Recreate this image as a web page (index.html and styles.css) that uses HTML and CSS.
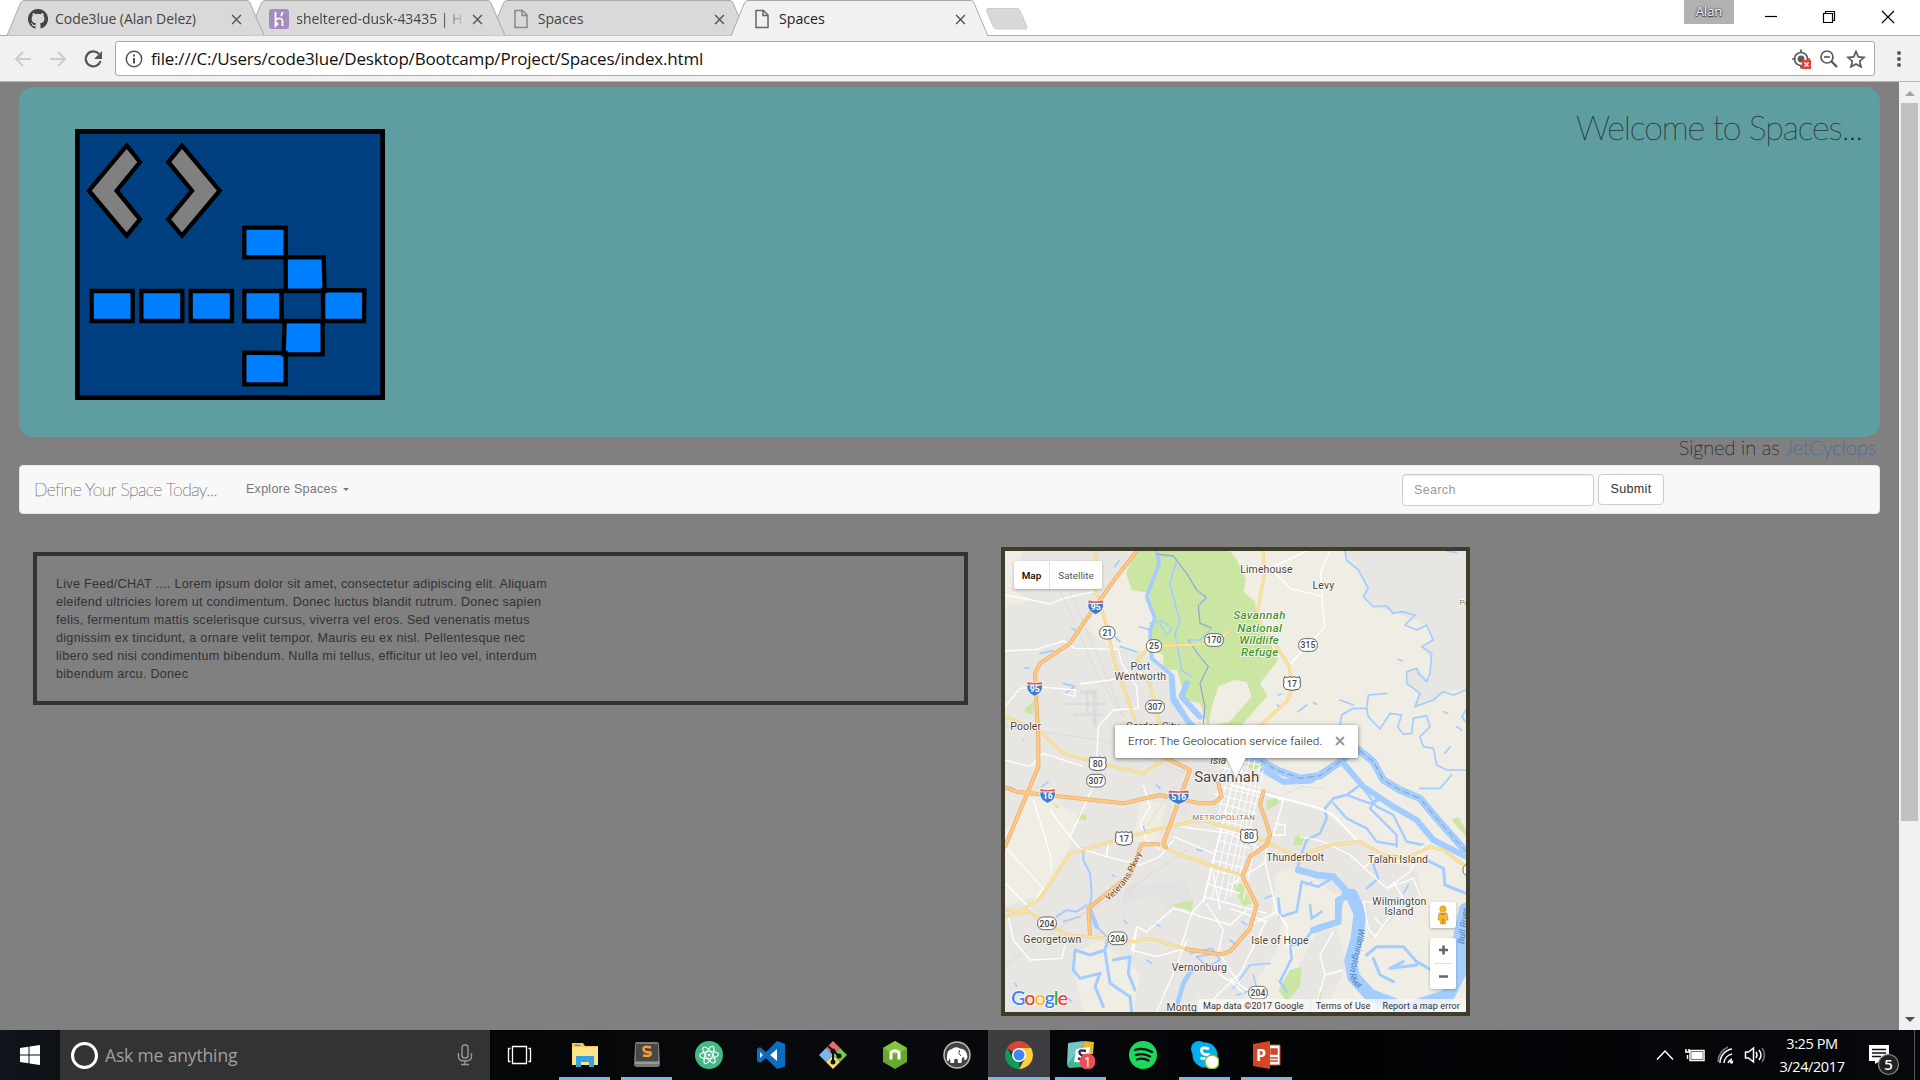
FILE: index.html
```html
<!DOCTYPE html>
<html lang="en">
<head>
<meta charset="utf-8">
<title>Spaces</title>
<link rel="stylesheet" href="styles.css">
</head>
<body>
<div class="tabstrip">
  <div class="tab tab-1">
    <svg class="tab-shape" viewBox="0 0 257 36"><path d="M0 35.5 13.500 3Q15 .5 17 .5H240Q242 .5 243 3L257 35.500"/></svg>
    <svg class="tab-icon" viewBox="0 0 16 16"><path fill="#444" d="M8 0C3.580 0 0 3.580 0 8c0 3.540 2.290 6.530 5.470 7.590.4.070.55-.17.55-.38v-1.490c-2.010.37-2.530-.49-2.690-.94-.09-.23-.48-.94-.82-1.130-.28-.15-.68-.52-.01-.53.63-.01 1.080.58 1.230.82.72 1.210 1.870.87 2.330.66.070-.52.28-.87.51-1.070-1.780-.2-3.640-.89-3.640-3.950 0-.87.31-1.590.82-2.150-.08-.2-.36-1.020.08-2.120 0 0 .67-.21 2.200.82a7.600 7.600 0 0 1 4 0c1.530-1.040 2.200-.82 2.200-.82.44 1.100.16 1.920.08 2.120.51.56.82 1.270.82 2.150 0 3.070-1.870 3.750-3.650 3.950.29.25.54.73.54 1.480v2.190c0 .21.15.46.55.38A8 8 0 0 0 8 0z"/></svg>
    <span class="tab-title t1">Code3lue (Alan Delez)</span>
    <svg class="tab-close" viewBox="0 0 10 10"><path d="M1 1 9 9M9 1 1 9"/></svg>
  </div>
  <div class="tab tab-2">
    <svg class="tab-shape" viewBox="0 0 257 36"><path d="M0 35.500 13.500 3Q15 .5 17 .5H240Q242 .5 243 3L257 35.500"/></svg>
    <svg class="tab-icon" viewBox="0 0 20 20"><rect width="20" height="20" rx="3" fill="#a78bc0"/><path d="M6.500 3v8q3-2 5-1.500T13.500 12v5M6.500 17v-4l2 2zM13.500 3q0 2-1.500 4" fill="none" stroke="#fff" stroke-width="1.800"/></svg>
    <span class="tab-title t2">sheltered-dusk-43435 | H</span>
    <svg class="tab-close" viewBox="0 0 10 10"><path d="M1 1 9 9M9 1 1 9"/></svg>
  </div>
  <div class="tab tab-3">
    <svg class="tab-shape" viewBox="0 0 257 36"><path d="M0 35.500 13.500 3Q15 .5 17 .5H240Q242 .5 243 3L257 35.500"/></svg>
    <svg class="tab-icon" viewBox="0 0 20 20"><path d="M4 1.500h7.500l4.500 4.500v12.500H4zM11 2v4.500h5" fill="none" stroke="#888" stroke-width="1.500"/></svg>
    <span class="tab-title">Spaces</span>
    <svg class="tab-close" viewBox="0 0 10 10"><path d="M1 1 9 9M9 1 1 9"/></svg>
  </div>
  <div class="tab tab-active">
    <svg class="tab-shape" viewBox="0 0 257 36"><path d="M0 36 13.500 3Q15 .5 17 .5H240Q242 .5 243 3L257 36"/></svg>
    <svg class="tab-icon" viewBox="0 0 20 20"><path d="M4 1.500h7.500l4.500 4.500v12.500H4zM11 2v4.500h5" fill="none" stroke="#666" stroke-width="1.500"/></svg>
    <span class="tab-title">Spaces</span>
    <svg class="tab-close" viewBox="0 0 10 10"><path d="M1 1 9 9M9 1 1 9"/></svg>
  </div>
  <svg class="newtab" viewBox="0 0 44 22"><path d="M3 .5H32Q34 .5 35 2.500L42 19Q42.500 21 40.500 21H12Q9.500 21 8.500 19L1.500 3Q1 .5 3 .5Z" fill="#d8d8d8" stroke="#ccc"/></svg>
  <div class="win">
    <span class="user">Alan</span>
    <svg class="win-buttons" viewBox="0 0 160 36"><g fill="none" stroke="#000" stroke-width="1.200"><path d="M9 16.500H21"/><path d="M67.500 13.500h9v9h-9zM69.500 13v-1.500h9v9H77"/><path d="M126 11 138 23M138 11 126 23"/></g></svg>
  </div>
</div>
<div class="toolbar">
  <svg class="nav-icons" viewBox="0 0 115 45"><g fill="none" stroke-width="2"><path stroke="#ccc" d="M31 23H16M23 16 16 23 23 30"/><path stroke="#ccc" d="M50 23H65M58 16 65 23 58 30"/><path stroke="#555" stroke-width="2.200" d="M99 18A7.500 7.500 0 1 0 100.500 25"/></g><path fill="#555" d="M102 15v8h-8z"/></svg>
  <div class="omnibox">
    <svg class="info" viewBox="0 0 18 18"><circle cx="9" cy="9" r="7.700" fill="none" stroke="#555" stroke-width="1.500"/><path d="M9 8v5.500M9 4.500v2" stroke="#555" stroke-width="2"/></svg>
    <span class="url">file:///C:/Users/code3lue/Desktop/Bootcamp/Project/Spaces/index.html</span>
    <svg class="omni-icons" viewBox="0 0 76 22"><g fill="none" stroke="#5a5a5a" stroke-width="1.700"><circle cx="10" cy="11" r="6.500"/><path d="M10 1.500V5M10 17v3.500M1 11h3.500M16 11h3"/><circle cx="10" cy="11" r="2.600" fill="#5a5a5a"/><circle cx="36" cy="9" r="6"/><path d="M33 9h6"/><path d="M40.500 13.500 46 19" stroke-width="2.400"/><path d="M65 3.500 67.300 8.900 73 9.400 68.700 13.200 70 18.800 65 15.900 60 18.800 61.300 13.200 57 9.400 62.700 8.900Z"/></g><rect x="11" y="12" width="9" height="9" fill="#db4437"/><path d="M13.500 14.500l4 4m0-4-4 4" stroke="#fff" stroke-width="1.400"/></svg>
  </div>
  <svg class="menu" viewBox="0 0 10 20"><g fill="#5a5a5a"><circle cx="5" cy="4" r="2"/><circle cx="5" cy="10" r="2"/><circle cx="5" cy="16" r="2"/></g></svg>
</div>

<div class="viewport">
  <main class="page">
    <header class="hero">
      <svg class="logo" viewBox="45 57 930 813">
        <path fill="#004080" stroke="#000" stroke-width="14" d="M52 64H968V863H52Z"/>
        <g fill="#808080" stroke="#000" stroke-width="13"><path d="M200 107 240 156 170 242 240 328 200 377 87 242Z"/><path d="M366 107 325 156 396 242 325 328 366 377 479 242Z"/></g>
        <g fill="#0080ff" stroke="#000" stroke-width="13">
          <path d="M95 543H218V633H95ZM244 543H367V633H244ZM392 543H516V633H392ZM553 353H677V442H553ZM553 728 677 729V823H553ZM677 442H791L794 543H677ZM789 540 913 541 912 633H789ZM674 633H788V733H671ZM553 543H665V633H553Z"/>
          <path fill="#004080" d="M665 543H789V633H665Z"/>
        </g>
      </svg>
      <h1>Welcome to Spaces...</h1>
    </header>
    <p class="signed"><span>Signed in as <a>JetCyclops</a></span></p>
    <nav class="navbar">
      <span class="brand">Define Your Space Today...</span>
      <span class="explore">Explore Spaces</span><i class="caret"></i>
      <form class="search"><input class="field" type="text" placeholder="Search"><button class="submit" type="button">Submit</button></form>
    </nav>
    <div class="content">
      <section class="chat">Live Feed/CHAT .... Lorem ipsum dolor sit amet, consectetur adipiscing elit. Aliquam<br>eleifend ultricies lorem ut condimentum. Donec luctus blandit rutrum. Donec sapien<br>felis, fermentum mattis scelerisque cursus, viverra vel eros. Sed venenatis metus<br>dignissim ex tincidunt, a ornare velit tempor. Mauris eu ex nisl. Pellentesque nec<br>libero sed nisi condimentum bibendum. Nulla mi tellus, efficitur ut leo vel, interdum<br>bibendum arcu. Donec</section>
      <section class="map">
        <svg class="map-art" viewBox="15 33 1383 1383">
          <defs>
            <g id="interstate"><path d="M-22-20Q0-14 22-20L24-10H-24Z" fill="#dc5550" stroke="#fff" stroke-width="2"/><path d="M-23-10H23Q27 12 0 24-27 12-23-10Z" fill="#3f7ccb" stroke="#fff" stroke-width="2"/></g>
            <path id="us" d="M-22-20-14-17Q-6-22 0-18 6-22 14-17L22-20Q27-12 24-4 29 12 18 18L0 21-18 18Q-29 12-24-4-27-12-22-20Z" fill="#fff" stroke="#555" stroke-width="3"/>
            <rect id="st3" x="-28" y="-19" width="56" height="38" rx="17" fill="#fff" stroke="#666" stroke-width="3"/>
            <rect id="st2" x="-23" y="-19" width="46" height="38" rx="18" fill="#fff" stroke="#666" stroke-width="3"/>
          </defs>
          <rect x="0" y="0" width="1400" height="1420" fill="#f0ede4"/>
          <g fill="#e8e6e3">
            <path d="M70 33H405L290 190 250 255 330 325 430 335 500 400 570 560 690 620 780 690 790 745 970 815 1060 890 1150 960 1250 990 1265 1060 1110 1200 1090 1080 1000 1060 900 980 830 1000 815 1120 760 1160 850 1120 830 1230 700 1416H400L420 1300 300 1200 220 1240 230 1330 250 1416H15V1100L130 1060 200 940 240 820 90 770 15 870V200L100 180 30 150Z"/>
            <path d="M1035 33 1090 110 1095 170 1130 200 1220 230 1290 260 1300 300 1265 320 1295 360 1290 420 1255 385 1220 390 1220 430 1255 455 1250 500 1300 480 1330 455 1398 450V33Z"/>
            <path d="M950 1180 1010 1165 1040 1280 970 1416H850L900 1270Z"/>
          </g>
          <g opacity=".8"><path d="M90 770 150 760 240 850 130 890ZM420 780 500 790 470 920 400 900Z" fill="#f0ede4"/></g>
          <g fill="#dddbd9"><path d="M195 488h120v8H195zM240 450l50 0 0 110-12 0 0-98-38 0zM220 520h90v7h-90zM258 460h8v60h-8z"/><path d="M380 1040 560 1020 580 1100 500 1110 470 1060 360 1100Z" fill="#e3e1e1"/></g>
          <g fill="#cbe6a3">
            <path d="M405 33 378 100 395 150 450 160 440 185 465 235 450 270 440 320 490 345V390H530L560 480 600 490 625 560H720L755 470 758 426 720 420 660 432 640 525 700 556 725 556 802 467 780 430 835 360 770 230 765 185 730 155 738 120 710 60 690 33Z"/>
            <path d="M70 510 105 480 100 525 80 520ZM60 605 75 590 70 605ZM510 1095 580 1080 575 1112ZM235 820 262 828 258 842 232 835ZM155 785 180 800 170 805ZM885 890 915 885 905 915 880 915ZM800 780 830 773 838 790 800 810ZM700 1035 725 1030 755 1090 730 1100ZM835 1350 870 1290 905 1280 900 1340 860 1385ZM1355 840 1375 830 1398 870V890ZM730 672 795 675 760 690ZM950 1365 965 1355 960 1385Z"/>
            <path d="M655 440 700 420 740 425 755 470 690 545 625 560 635 500Z" fill="#f0ede4"/>
          </g>

          <g fill="none" stroke="#a3ccff" stroke-linejoin="round" stroke-linecap="round">
            <g stroke-width="6">
              <path d="M530 60 510 130 525 190 540 245 525 280 545 390 575 410" stroke-width="5"/>
              <path d="M450 250 485 242 515 265 500 285 480 250M470 45 520 50 560 100 590 150 620 175 595 200 600 250 635 265 600 300 565 300 600 350 625 380 600 430 615 500 610 550" stroke-width="4"/>
              <path d="M345 80l12-18M120 340l40-8M75 385l12-2M190 430l35 10-30 20M345 290l15 15M360 320l50 15M420 260l30 10M215 265l12 6" stroke-width="5"/>
            </g>
            <path stroke-width="11" d="M470 33 478 70 440 170 465 235 450 270 455 355 515 405 522 470 570 550"/>
            <path stroke-width="18" d="M515 410 520 480 565 545 640 625 700 655M560 430 545 470 600 530"/>
            <g transform="translate(690 0)" stroke-width="5">
              <path d="M345 33 350 60 385 90 415 145 400 170 430 200 470 198 490 220 515 215 555 225 525 255 560 270 590 255 610 300 575 320 605 340 600 400 590 425 565 400 560 385 530 395V430L570 460 555 500 610 480 640 455 670 465 708 450"/>
              <path d="M330 555 335 525 370 505 410 505 415 465 470 460M410 505 415 530 450 567 480 520 515 525 503 560 520 583 545 580 550 535 590 527 600 560 570 590 580 620 610 625 620 675 650 690 708 690"/>
              <path d="M330 480l40 15M205 515l25-20M250 488l10 5M505 358l12 5M650 33l30 5M640 515l12 5M680 560l15 10M708 510l-12 20 10 15M145 465l8-3M142 495l8 5M660 620l-15 20"/>
            </g>
            <path stroke-width="22" d="M690 645 780 660 830 690 900 715 960 707 1020 665 1070 625 1120 665 1150 720 1200 750 1260 775 1310 835 1398 935"/>
            <path stroke-width="18" d="M790 690 850 725 930 722 1010 670M1030 670 1090 740 1180 800 1250 840 1300 900 1398 950"/>
            <g transform="translate(690 705)" stroke-width="8">
              <path d="M390 30 350 60 310 70 285 100 290 130 270 175 230 195 210 250 200 290"/>
              <path d="M310 85 350 130 410 160 440 200 500 210M400 40 440 95 490 120 530 200 580 210M350 60 420 85 460 70M440 70 420 100 500 180 500 215M460 240 430 270 445 310 410 340" stroke-width="7"/>
              <path d="M215 320 265 335 305 310M215 320 200 410 150 425 145 370M240 390 245 430 275 410M340 350 325 440 250 465 215 505 180 510 185 550 150 620 170 650"/>
              <path d="M410 540 440 515 520 515 560 560 630 600M560 570 480 580 520 560M430 550 450 600 490 620M590 255 640 280 645 330 708 355" stroke-width="9"/>
              <path d="M10 640 60 570 120 565M70 600 80 640 20 660M570 40H630L665 0M130 360l-25 10M230 330l15-10M480 390l20-20M535 330l-15 25" stroke-width="5"/>
            </g>
            <path stroke-width="20" d="M895 990 950 1005 1000 1010 1050 1065 1015 1080 1015 1145 940 1170"/>
            <path stroke-width="38" d="M1055 1065 1080 1120 1070 1200 1052 1260 1060 1310 1110 1365 1200 1400"/>
            <path stroke-width="44" d="M1398 1110 1380 1200 1385 1280 1340 1370 1250 1400"/>
            <path stroke-width="6" d="M250 925 250 960 270 1000 275 1060 268 1110 290 1160 320 1190M170 1130 200 1110 230 1115 260 1095M190 1145 240 1130"/>
            <path stroke-width="9" d="M325 1195 315 1230 270 1245 225 1230 220 1290 240 1315 300 1300 285 1340 310 1400M315 1235 330 1330 390 1370 395 1416M340 1260 390 1250 385 1300 405 1350"/>
            <path stroke-width="14" d="M575 1290 550 1330 530 1400M270 1110 290 1160"/>
            <path stroke-width="5" d="M570 1240 635 1225 660 1260 620 1280 590 1250 650 1240M30 740l15 10M125 740l20-15M370 1140l10 10M465 1150l15 10M345 1010l-8-5M590 928l18 4M350 880l25 20M430 860l5 15M470 735l10 10M690 1200l15 12M725 1145l15 10M45 1330l5 8M200 1370l15 15M440 1260l15 10"/>
          </g>
          <g fill="none" stroke="#8b9aac" stroke-width="3" stroke-dasharray="20 11"><path d="M780 660 830 690 900 715 960 707 1020 665 1070 625 1120 665 1150 720 1200 750 1260 775 1310 835 1398 935"/><path stroke="#97a3ae" stroke-dasharray="none" d="M470 42 520 47 560 100 590 150 620 172 595 195 600 250 635 263M565 302 600 350 625 380 600 430 615 500 610 550"/></g>

          <g fill="none" stroke="#d5d4d2" stroke-width="2"><path d="M170 130 300 420 370 530M200 130 370 530M15 560 300 600 560 700M15 1275 200 1150 430 1020 560 930M350 1090 470 980M440 860 520 740 560 830M850 765 900 740 970 745"/></g>
          <g fill="none" stroke="#fff" stroke-width="4" stroke-linejoin="round">
            <path d="M15 165 70 175 150 192 190 175 280 155M15 333 110 328 190 303 225 325 355 328 365 370 410 440 415 505 340 510 295 560 290 660M15 500 60 445 110 440 225 450V470L190 460M240 432 330 420 440 395M15 660 90 680 130 640 250 680M280 740 210 890 240 925 320 950 325 910 370 895M210 890 150 810M15 920 130 1045 90 1100M15 1030 90 1105M25 1130 40 1200 90 1260 185 1255 195 1215M100 780 150 940 155 990"/>
            <path d="M320 950 420 975 480 950 520 900M400 1240 410 1160 440 1175 520 1105 690 1155 740 1110M410 1160 395 1230 470 1250 540 1230 575 1120M470 1416 520 1300 560 1200M575 1120 610 1080 700 720M655 1235 670 1170 620 1090M655 1300 700 1330 730 1360M655 1235 690 1290 720 1330M600 1416 720 1300 800 1140"/>
            <path d="M430 735 450 800 420 850 440 900 480 930M540 860 690 880 790 930M520 890 640 940M620 1030 720 1060M610 1070 800 1120M640 1000 660 1110"/>
            <g transform="translate(690 0)"><path d="M300 33 272 95 278 210 285 260 178 375M230 33 120 85 180 145 280 170"/></g>
            <g transform="translate(690 705)"><path stroke-width="6" d="M0 30 100 55 270 100 310 120 380 195"/><path d="M100 55 160 75 130 180 165 180V150L135 145M210 185 280 200 360 240 470 340 500 320 540 290 580 210M470 340 550 310 570 360M490 320 520 370 435 485 415 460 400 380 430 380M400 280 450 235M435 430 460 455M110 210 105 260 140 410 60 450 0 540M140 410 170 450 175 520M310 470 270 540 285 600 260 680M285 600 340 585M0 610 60 650M0 330 110 260M0 400 110 440"/></g>
            <path stroke-width="3" d="M720 640 610 1090M735 640 635 1080M750 650 655 1080M765 660 675 1080M780 670 690 1070M700 640 650 850M685 650 640 800M790 690 710 1040M770 900 730 1080M660 680 780 710M650 710 790 745M645 735 780 770M640 760 775 795M660 790 770 820M665 815 765 840M655 840 760 865M650 865 755 890M650 900 750 925M640 930 740 955M635 960 735 985M630 990 730 1010"/>
          </g>
          <g fill="none" stroke-linejoin="round" stroke-linecap="round">
            <path stroke="#eccf83" stroke-width="9" d="M290 33 280 130 300 190 320 260 345 370 405 540M690 272 640 312 490 317 440 330 412 360 450 430 480 556M15 530 120 575 190 640 300 670 430 700 500 655M15 1110 60 1115 120 1075 210 940 300 915 460 870 600 840 700 865 800 905 890 950 990 915 1080 905 1150 945 1220 955 1290 920 1330 930 1398 980M15 1130 80 1113 200 1185 310 1193 400 1205 450 1195 560 1228M490 920 540 945 728 1007M788 33 795 90 770 230 840 335 868 380 875 450 860 485 780 556"/>
            <path stroke="#fbe3a0" stroke-width="6" d="M290 33 280 130 300 190 320 260 345 370 405 540M690 272 640 312 490 317 440 330 412 360 450 430 480 556M15 530 120 575 190 640 300 670 430 700 500 655M15 1110 60 1115 120 1075 210 940 300 915 460 870 600 840 700 865 800 905 890 950 990 915 1080 905 1150 945 1220 955 1290 920 1330 930 1398 980M15 1130 80 1113 200 1185 310 1193 400 1205 450 1195 560 1228M490 920 540 945 728 1007M788 33 795 90 770 230 840 335 868 380 875 450 860 485 780 556"/>
            <path stroke="#e8ac66" stroke-width="12" d="M410 33 350 110 250 250 210 310 120 370 105 400 115 600V680L15 920M15 743 50 755 370 790 480 765 600 790 640 790 665 770 655 730M500 655 570 690 530 800 490 910 498 922M475 913H425L390 1005 265 1105 270 1180M560 1228 660 1243 690 1235 750 1165 770 1095 728 1010 750 950 800 915 810 885 795 835 780 795 790 755"/>
            <path stroke="#fdc885" stroke-width="8" d="M410 33 350 110 250 250 210 310 120 370 105 400 115 600V680L15 920M15 743 50 755 370 790 480 765 600 790 640 790 665 770 655 730M500 655 570 690 530 800 490 910 498 922M475 913H425L390 1005 265 1105 270 1180M560 1228 660 1243 690 1235 750 1165 770 1095 728 1010 750 950 800 915 810 885 795 835 780 795 790 755"/>
          </g>
          <use href="#interstate" x="287" y="200"/><use href="#interstate" x="104" y="445"/><use href="#interstate" x="143" y="766"/><use href="#interstate" transform="translate(536 770) scale(1.350 1)"/>
          <use href="#st2" x="322" y="278"/><use href="#st2" x="462" y="318"/><use href="#st3" x="642" y="300"/><use href="#st3" x="465" y="500"/><use href="#st3" x="288" y="722"/><use href="#st3" x="924" y="315"/><use href="#st3" x="141" y="1150"/><use href="#st3" x="353" y="1195"/><use href="#st3" x="774" y="1358"/>
          <use href="#us" x="293" y="671"/><use href="#us" x="372" y="895"/><use href="#us" x="876" y="430"/><use href="#us" x="747" y="888"/><use href="#st2" x="1412" y="990"/>
          <g class="shield-text" text-anchor="middle">
            <text x="322" y="288">21</text><text x="462" y="328">25</text><text x="642" y="310">170</text><text x="465" y="510">307</text><text x="293" y="681">80</text><text x="288" y="732">307</text><text x="924" y="325">315</text><text x="876" y="440">17</text><text x="747" y="898">80</text><text x="372" y="905">17</text><text x="141" y="1160">204</text><text x="353" y="1205">204</text><text x="774" y="1368">204</text>
            <g class="inter-text"><text x="287" y="211">95</text><text x="104" y="456">95</text><text x="143" y="777">16</text><text x="536" y="781">516</text></g>
          </g>
          <g class="place" text-anchor="middle">
            <text x="421" y="391" textLength="59">Port</text><text x="421" y="420" textLength="155">Wentworth</text><text x="77" y="570" textLength="92">Pooler</text><text x="458" y="570" textLength="160">Garden City</text>
            <text x="719" y="98" textLength="157" dx="80">Limehouse</text><text x="970" y="146" textLength="65">Levy</text><text x="655" y="672" class="ital">Isla</text>
            <text x="680" y="725" class="city" textLength="195">Savannah</text>
            <text x="157" y="1209" textLength="174">Georgetown</text><text x="598" y="1293" textLength="166">Vernonburg</text><text x="545" y="1412">Montg</text>
            <text x="885" y="963" textLength="173">Thunderbolt</text><text x="1194" y="968" textLength="180">Talahi Island</text><text x="1198" y="1094" textLength="162">Wilmington</text><text x="1197" y="1126" textLength="87">Island</text><text x="840" y="1212" textLength="172">Isle of Hope</text>
            <text class="metro" x="671" y="841" textLength="188">METROPOLITAN</text><text class="metro" x="1393" y="194">PA</text>
            <g class="refuge"><text x="778" y="238" textLength="157">Savannah</text><text x="779" y="275" textLength="134">National</text><text x="777" y="311" textLength="119">Wildlife</text><text x="779" y="348" textLength="112">Refuge</text></g>
          </g>
          <path id="vet" fill="none" d="M323 1083Q392 1035 430 925"/><text class="vet"><textPath href="#vet">Veterans Pkwy</textPath></text>
          <path id="wil" fill="none" d="M1076 1165Q1070 1220 1050 1290 1042 1340 1105 1358"/><text class="river"><textPath href="#wil">Wilmington River</textPath></text>
          <text class="river" transform="translate(1391 1213) rotate(-82)">Bull River</text>
        </svg>
        <div class="maptype"><b>Map</b><span>Satellite</span></div>
        <div class="bubble"><span>Error: The Geolocation service failed.</span><svg class="bubble-x" viewBox="0 0 10 10"><path d="M1 1 9 9M9 1 1 9"/></svg><svg class="tail" viewBox="0 0 20 24"><path d="M0 0 10 22 20 0Z" fill="#fff"/><path d="M0 1 10 22 20 1" fill="none" stroke="#aaa" stroke-width=".7"/></svg></div>
        <div class="pegman"><svg viewBox="0 0 26 26"><circle cx="13" cy="7" r="3.200" fill="#f5b32a" stroke="#d99417" stroke-width=".6"/><path d="M9 11h8l1 7h-2l-.5 4h-5l-.5-4H8z" fill="#f9b72e" stroke="#d28b17" stroke-width=".6"/><path d="M13 16v6M10 11l3 2 3-2" stroke="#bd7517" fill="none"/></svg></div>
        <div class="zoomer"><svg viewBox="0 0 26 51"><path d="M13.500 7.500v9M9 12h9M9 38.500h9" stroke="#666" stroke-width="2.600"/><path d="M4 25.500h18" stroke="#e0e0e0"/></svg></div>
        <svg class="google" viewBox="0 0 60 22"><text y="16" textLength="57"><tspan fill="#4285f4">G</tspan><tspan fill="#ea4335">o</tspan><tspan fill="#fbbc05">o</tspan><tspan fill="#4285f4">g</tspan><tspan fill="#34a853">l</tspan><tspan fill="#ea4335">e</tspan></text></svg>
        <div class="legal"><span>Map data ©2017 Google</span><span>Terms of Use</span><span>Report a map error</span></div>
      </section>
    </div>
  </main>
  <div class="scrollbar"><i class="up"></i><i class="thumb"></i><i class="down"></i></div>
</div>

<footer class="taskbar">
  <div class="start"><svg viewBox="0 0 20 20"><path fill="#fff" d="M0 3 8.500 1.800V9.500H0ZM9.500 1.600 20 0V9.500H9.500ZM0 10.500H8.500V18.200L0 17ZM9.500 10.500H20V20L9.500 18.400Z"/></svg></div>
  <div class="cortana"><i class="ring"></i><span>Ask me anything</span><svg class="mic" viewBox="0 0 16 22"><g fill="none" stroke="#999" stroke-width="1.400"><rect x="5" y="1" width="6" height="13" rx="2.500"/><path d="M1.500 9v4q0 4 6.500 4t6.500-4V9M8 17v4M4 20.500h8"/></g></svg></div>
  <div class="taskview"><svg viewBox="0 0 26 20"><g fill="none" stroke="#fff" stroke-width="1.300"><path d="M5.500 1.500h14v17h-14zM3.500 3.500h-2v13h2M21.500 3.500h2v13h-2"/></g></svg></div>
  <div class="app open"><svg viewBox="0 0 28 28"><path fill="#f4c64f" d="M1 2h11l2 3h13v6H1z"/><path fill="#fde58c" d="M1 6h26v18H1z"/><path fill="#35a3df" d="M5 15h18v11h-5v-5h-8v5H5z"/><path fill="#35a3df" d="M4 3.500h5v1.500H4z"/></svg></div>
  <div class="app open"><svg viewBox="0 0 28 28"><path fill="#777" d="M2 3q0-2 2-2h20q2 0 2 2l1 20q0 3-3 3H4q-3 0-3-3z"/><path fill="#484848" d="M3 3h22v17H3z"/><path fill="#999" d="M2 21h24v2H2z"/><path d="M18 6.500Q10.500 4.500 10.500 8T17.500 11.500Q19 16 10 14.500" fill="none" stroke="#ff9a2e" stroke-width="2.500"/></svg></div>
  <div class="app"><svg viewBox="0 0 28 28"><circle cx="14" cy="14" r="14" fill="#45b984"/><g fill="none" stroke="#fff" stroke-width="1.100"><ellipse cx="14" cy="14" rx="3.500" ry="9.500" transform="rotate(25 14 14)"/><ellipse cx="14" cy="14" rx="3.500" ry="9.500" transform="rotate(85 14 14)"/><ellipse cx="14" cy="14" rx="3.500" ry="9.500" transform="rotate(-35 14 14)"/></g><circle cx="14" cy="14" r="1.500" fill="#fff"/></svg></div>
  <div class="app"><svg viewBox="0 0 28 28"><path fill="#0a6fc2" d="M20 0 29 3V25L20 28 9 17 3 22 0 20V8L3 6 9 11ZM20 8 13 14 20 20ZM3 11V17L6 14Z" fill-rule="evenodd"/><path fill="#fff" d="M20 8 13 14 20 20ZM3 11V17L6 14Z"/></svg></div>
  <div class="app"><svg viewBox="0 0 28 28"><path fill="#f06c70" d="M14 0 21 7 14 14 7 7Z"/><path fill="#7eb6ef" d="M7 7 14 14 7 21 0 14Z"/><path fill="#77c84c" d="M21 7 28 14 21 21 14 14Z"/><path fill="#ffd96b" d="M14 14 21 21 14 28 7 21Z"/><g fill="#111" stroke="#111" stroke-width="2"><path d="M9 5 20 15M14 10v12"/><circle cx="14" cy="10" r="1.500"/><circle cx="20" cy="15" r="1.500"/><circle cx="14" cy="21" r="1.500"/></g></svg></div>
  <div class="app"><svg viewBox="0 0 28 28"><path fill="#69a82e" d="M14 0 26 7V21L14 28 2 21V7Z"/><path fill="#86c440" d="M14 0 26 7 14 14 2 7Z"/><path d="M10 18.500V11.500Q14 8 18 11.500V18.500" stroke="#fff" stroke-width="3" fill="none"/></svg></div>
  <div class="app"><svg viewBox="0 0 28 28"><circle cx="14" cy="14" r="13" fill="#444" stroke="#bbb" stroke-width="1.500"/><path fill="#fff" d="M4 15Q4 9 9 8 12 5 17 7.500 24 8 24.500 16L23 19H21.500L21 16 19 17 18.500 22H15L14.500 18H11.500L11 22H7.500L7 17 5.500 20H4Z"/><path d="M16.500 9q-2 4 1.500 6" fill="none" stroke="#444"/></svg></div>
  <div class="app open active"><svg viewBox="0 0 28 28"><path fill="#db4437" d="M14 14 1.900 7A14 14 0 0 1 26.100 7H14Z"/><path fill="#0f9d58" d="M14 14 14 28A14 14 0 0 1 1.900 7L8 17.500Z"/><path fill="#ffcd40" d="M14 7H26.100A14 14 0 0 1 14 28L20 17.500Z"/><circle cx="14" cy="14" r="7" fill="#fff"/><circle cx="14" cy="14" r="5.500" fill="#4285f4"/></svg></div>
  <div class="app open"><svg viewBox="0 0 28 28"><path fill="#75c8c5" d="M1 2 17 0 13 14 0 24Z"/><path fill="#e5b92d" d="M17 0 27 1 26 13 13 13Z"/><path fill="#3eb991" d="M0 24 8 13 16 26 2 27Z"/><path fill="#fff" d="M9 8 23 6 21 22 7 21Z"/><path d="M19 10Q12 8.500 12.500 11.500T18 15Q17 19 11 17.500" fill="none" stroke="#3d2b43" stroke-width="2.400"/><circle cx="20.500" cy="20.500" r="8" fill="#eb4d5c"/><text x="20.500" y="25.500" text-anchor="middle" font-size="14" fill="#fff">1</text></svg></div>
  <div class="app"><svg viewBox="0 0 28 28"><circle cx="14" cy="14" r="14" fill="#1ed760"/><path d="M6 9Q14 6 23 11M7 14Q14 11.500 21 15.500M8 18.500Q14 16.500 19.500 19.500" fill="none" stroke="#111" stroke-width="2.300" stroke-linecap="round"/></svg></div>
  <div class="app open"><svg viewBox="0 0 28 28"><circle cx="8" cy="8" r="8" fill="#00aff0"/><circle cx="14" cy="14" r="12.500" fill="#00aff0"/><path d="M18 8Q10.500 5 10.500 9.500T17.500 13.500Q19 19 9.500 17" fill="none" stroke="#fff" stroke-width="2.800"/><circle cx="21" cy="21" r="7" fill="#fff" stroke="#8bbf20" stroke-width="1.500"/></svg></div>
  <div class="app open"><svg viewBox="0 0 28 28"><path fill="#fff" stroke="#d24726" d="M14 4h13v20H14z"/><path d="M18 8h6v5h-6zM17 17h8M17 20h8" stroke="#d24726" fill="#d24726" stroke-width="1.500"/><path fill="#d24726" d="M0 3 17 0V28L0 25Z"/><text x="8" y="20" text-anchor="middle" font-size="16" font-weight="700" fill="#fff">P</text></svg></div>
  <div class="tray">
    <svg class="tray-icons" viewBox="1650 1030 125 50"><g fill="none" stroke="#fff" stroke-width="1.500"><path d="M1657 1059.500 1665 1051 1673 1059.500"/><path d="M1690 1050.500h14v10h-14zM1685 1052h5M1686 1049v3M1689 1049v3M1687.500 1055v4"/><path d="M1692 1052.500h10v6h-10z" fill="#fff"/><path d="M1720 1063A14 14 0 0 1 1732 1049M1724 1063A10 10 0 0 1 1732 1054M1728 1063A6 6 0 0 1 1732 1059" /><path stroke="#777" d="M1718 1062A17 17 0 0 1 1728 1047"/><circle cx="1731.500" cy="1062" r="1"/><path d="M1745.500 1052h3l5-4v14l-5-4h-3zM1756 1052q2 3 0 6M1759 1050q4 5 0 10"/><path stroke="#777" d="M1762 1048q5 7 0 14"/></g></svg>
    <div class="clock"><span class="time">3:25 PM</span><span class="date">3/24/2017</span></div>
    <svg class="notif" viewBox="0 0 44 50"><path fill="#fff" d="M4 15H24V31H15L10 34V31H4Z"/><path d="M7 19.500h14M7 23h14M7 26.500h9" stroke="#111" stroke-width="1.400"/><circle cx="23.500" cy="34.500" r="10" fill="#222" stroke="#888" stroke-width="1.200"/><text x="23.500" y="40" text-anchor="middle" font-size="15" font-weight="600" fill="#fff">5</text></svg>
    <i class="peek"></i>
  </div>
</footer>
</body>
</html>
```
FILE: styles.css
```css
*{box-sizing:border-box}
body{margin:0;width:1920px;height:1080px;overflow:hidden;display:flex;flex-direction:column;background:#808080;font-family:"Open Sans","Noto Sans",sans-serif}
svg{display:block;flex:none}

/* tab strip */
.tabstrip{height:36px;display:flex;background:#fff;border-bottom:1px solid #a9a9a9;padding-left:7px;position:relative;flex:none}
.tab{position:relative;width:257px;height:36px;margin-right:-15.700px;padding:0 22px 6px 21px;display:flex;align-items:center;flex:none}
.tab-1{z-index:3}
.tab-2{z-index:2}
.tab-3{z-index:1}
.tab-active{z-index:4}
.tab-shape{position:absolute;left:0;top:0;width:257px;height:36px}
.tab-shape path{fill:#d9d9d9;stroke:#a9a9a9}
.tab-active .tab-shape path{fill:#f1f1f1}
.tab-icon{position:relative;width:20px;height:20px;margin-top:8px}
.tab-title{position:relative;font-size:14.200px;color:#444;margin:6px 0 0 7px;white-space:nowrap;flex:1;overflow:hidden}
.t1,.t2{letter-spacing:-.05px}
.t1{font-size:14px}
.t2{margin-right:6px;font-size:14px;-webkit-mask-image:linear-gradient(90deg,#000 86%,transparent)}
.tab-active .tab-title{color:#222}
.tab-close{position:relative;width:11px;height:11px;margin-top:8px}
.tab-close path{stroke:#555;stroke-width:1.300}
.newtab{width:44px;height:22px;margin:8px 0 0 13px}
.win{margin-left:auto;display:flex}
.user{width:50px;height:24px;background:#b1b1b1;color:#fff;font-size:13px;line-height:23px;text-align:center;text-shadow:0 0 2px #000,0 1px 1px #333}
.win-buttons{width:160px;height:36px;margin:0 4px 0 22px}

/* toolbar */
.toolbar{height:46px;background:#f1f1f1;border-bottom:1px solid #b5b5b5;display:flex;align-items:center;flex:none}
.nav-icons{width:115px;height:45px}
.omnibox{width:1760px;height:35px;background:#fff;border:1px solid #a9a9a9;border-radius:3px;display:flex;align-items:center;padding:0 7px 0 9px}
.info{width:18px;height:18px}
.url{font-size:17px;color:#111;margin-left:8px;letter-spacing:-.19px;white-space:nowrap;line-height:30px}
.omni-icons{width:76px;height:22px;margin-left:auto}
.menu{width:10px;height:20px;margin-left:19px}

/* page */
.viewport{height:948px;display:flex;flex:none}
.page{width:1899px;padding:5px 19px 0}
.hero{height:350px;background:#5f9ea0;border-radius:15px;display:flex;justify-content:space-between;padding:42px 18px 0 56px}
.logo{width:310px;height:271px}
h1{font:100 34px/40px Lato,sans-serif;color:#222;margin:-22px 0 0;letter-spacing:-1.100px;white-space:nowrap;-webkit-text-stroke:.35px #2a3a3c}
.signed{margin:0;height:28px;display:flex;justify-content:flex-end;padding-right:4px;font:100 20px/20px Lato,sans-serif;color:#222;-webkit-text-stroke:.3px}
.signed a{color:#2f6cab}
.navbar{height:49px;background:#f8f8f8;border:1px solid #e7e7e7;border-radius:4px;display:flex;align-items:center;padding-left:14px;font:12.600px "Liberation Sans",Arial,sans-serif;color:#777}
.brand{font:100 17.500px Lato,sans-serif;color:#666;width:212px;white-space:nowrap;letter-spacing:-.5px;-webkit-text-stroke:.25px}
.explore{white-space:nowrap;letter-spacing:.22px;margin-top:-2px}
.caret{border:3.500px solid transparent;border-top-color:#777;border-bottom:0;margin:0 0 0 6px}
.search{display:flex;margin:0 215px 0 auto;gap:4px}
.field{width:192px;height:32px;border:1px solid #ccc;border-radius:4px;padding:0 11px;font:12.600px "Liberation Sans",Arial,sans-serif;letter-spacing:.3px;box-shadow:inset 0 1px 1px #00000014;background:#fff}
.field::placeholder{color:#999}
.submit{width:66px;height:31px;border:1px solid #ccc;border-radius:4px;background:#fff;color:#333;padding:0;font:12.600px "Liberation Sans",Arial,sans-serif;letter-spacing:.3px}
.content{display:flex;align-items:flex-start;justify-content:space-between;padding:33px 410px 0 14px}
.chat{width:935px;height:153px;margin-top:5px;border:4px solid #333;padding:19px 19px 17px;font:12.600px/18px "Liberation Sans",Arial,sans-serif;color:#333;white-space:nowrap;letter-spacing:.275px}

/* map */
.map{position:relative;width:469px;height:469px;border:4px solid #3f3d2a;overflow:hidden;font-family:Roboto,sans-serif}
.map-art{width:461px;height:461px}
.shield-text{font:500 26px Roboto,sans-serif;fill:#444}
.inter-text{fill:#fff;font-weight:700}
.place{font:400 31.500px Roboto,sans-serif;fill:#4a4238;stroke:#fff;stroke-width:4;paint-order:stroke;stroke-linejoin:round}
.city{font-size:45px}
.ital{font-style:italic}
.metro{font-size:24px;fill:#8b7355}
.refuge{font-weight:500;font-style:italic;font-size:35px;fill:#47922f}
.vet{font:500 27px Roboto,sans-serif;fill:#8c5a2b;stroke:#fff;stroke-width:3;paint-order:stroke}
.river{font:italic 27px Roboto,sans-serif;fill:#4e7fbe}
.maptype{position:absolute;left:9px;top:10px;width:88px;height:28px;background:#fff;border-radius:2px;box-shadow:0 1px 3px #0004;display:flex;align-items:center;font-size:9.900px;color:#555}
.maptype b{width:36px;height:28px;line-height:29px;text-align:center;border-right:1px solid #e5e5e5;color:#000;font-weight:500}
.maptype span{flex:1;text-align:center}
.bubble{position:absolute;left:110px;top:174px;width:243px;height:33px;background:#fff;border-radius:2px;box-shadow:0 1px 4px #0008;display:flex;align-items:center;padding:0 13px 2px;font-weight:300;font-size:11.700px;letter-spacing:.21px;color:#111;white-space:nowrap}
.bubble-x{width:10px;height:10px;margin-left:auto}
.bubble-x path{stroke:#999;stroke-width:2}
.tail{position:absolute;left:111px;top:32px;width:20px;height:24px}
.pegman,.zoomer{position:absolute;left:425px;width:26px;background:#fff;border-radius:2px;box-shadow:0 1px 3px #0004}
.pegman{top:351px;height:26px}
.zoomer{top:387px;height:51px}
.google{position:absolute;left:6px;bottom:1px;width:60px;height:22px;overflow:visible}
.google text{font:600 20px Lato,sans-serif;stroke:#fff;stroke-width:1.500;paint-order:stroke}
.legal{position:absolute;right:0;bottom:0;height:13px;background:#f8f8f8c8;display:flex;font-size:9px;line-height:14px;letter-spacing:.13px;color:#333;white-space:nowrap}
.legal span{padding:0 6px 0 5px;border-left:1px solid #ddd8}

/* scrollbar */
.scrollbar{width:21px;background:#f1f1f1;display:flex;flex-direction:column;align-items:center}
.up{border:5px solid transparent;border-top:0;border-bottom-color:#a3a3a3;margin:9px 0 7px}
.thumb{width:17px;height:718px;background:#c1c1c1}
.down{border:5px solid transparent;border-bottom:0;border-top-color:#505050;margin-top:auto;margin-bottom:8px}

/* taskbar */
.taskbar{height:50px;display:flex;background:linear-gradient(90deg,#10151b,#030405 15%,#080a0d 45%,#020305 70%,#06080b);color:#fff;flex:none}
.start{width:60px;display:grid;place-items:center}
.start svg{width:20px;height:20px}
.cortana{width:430px;background:#333;display:flex;align-items:center;padding:0 17px 0 11px}
.ring{width:27px;height:27px;border:3px solid #fff;border-radius:50%}
.cortana span{font-size:17.500px;color:#a0a0a0;margin-left:7px;letter-spacing:-.15px}
.mic{width:16px;height:22px;margin-left:auto}
.taskview{width:64px;display:grid;place-items:center;padding-right:4px}
.taskview svg{width:26px;height:20px}
.app{width:62px;display:grid;place-items:center;position:relative;flex:none}
.app svg{width:28px;height:28px}
.open::after{content:"";position:absolute;left:5px;right:6px;bottom:0;height:3px;background:#76b9ed}
.active{background:#3b3d3e}
.active::after{left:0;right:0}
.tray{margin-left:auto;display:flex}
.tray-icons{width:125px;height:50px}
.clock{width:74px;display:flex;flex-direction:column;align-items:center;font-size:14.500px;line-height:23px;padding-top:2px;letter-spacing:-.4px;white-space:nowrap}
.notif{width:44px;height:50px;margin-left:16px}
.peek{width:6px;border-left:1px solid #555;margin-left:5px}
```
